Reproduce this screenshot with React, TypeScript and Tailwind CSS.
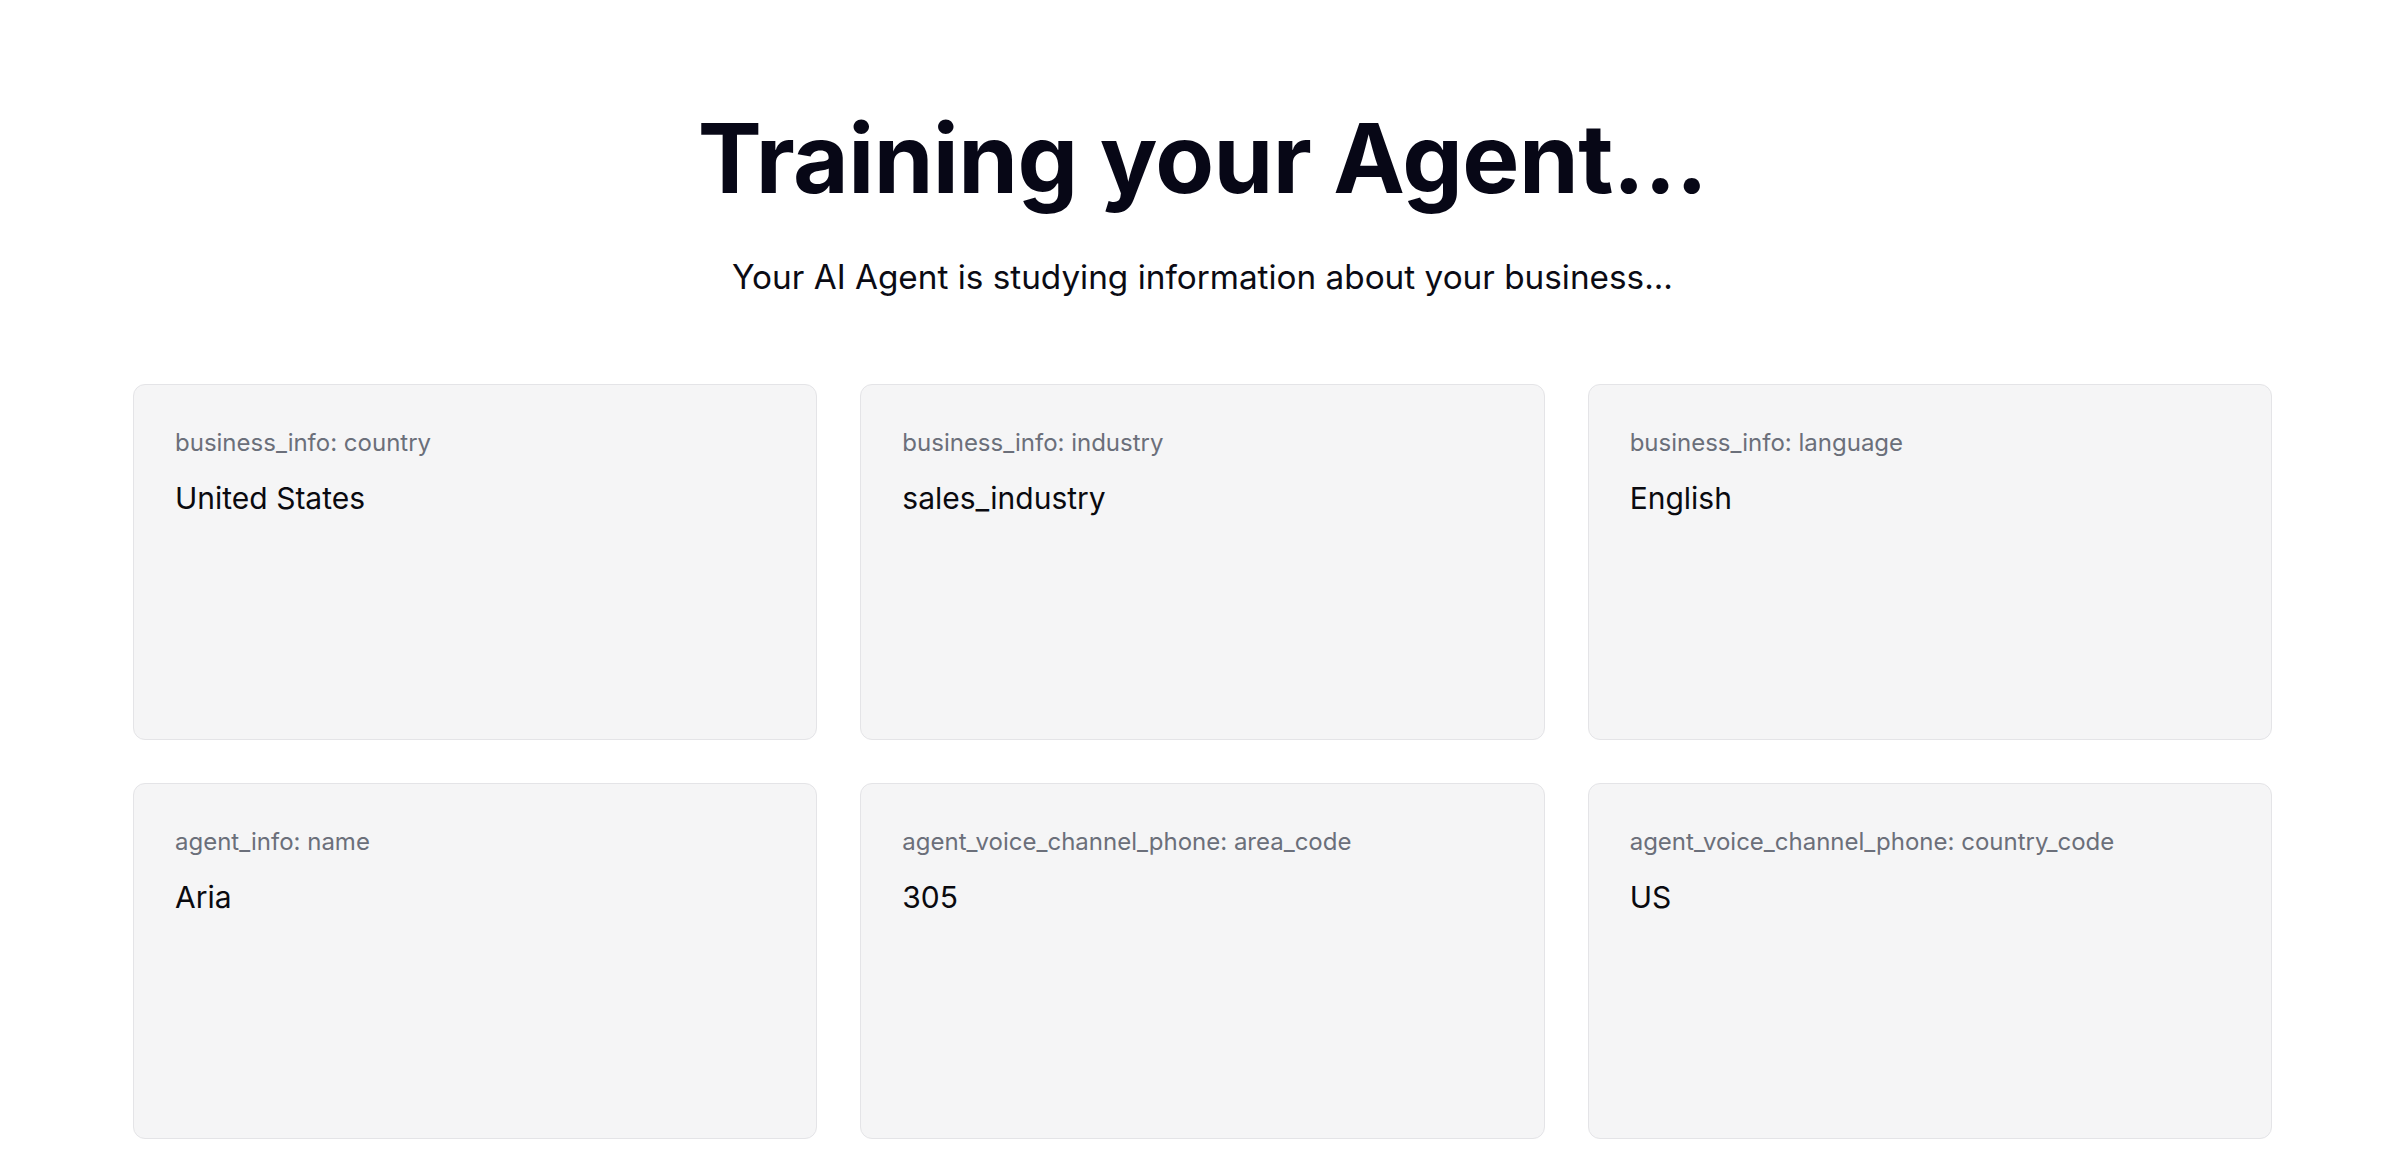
import React from 'react';

const fields = [
  { label: 'business_info: country', value: 'United States' },
  { label: 'business_info: industry', value: 'sales_industry' },
  { label: 'business_info: language', value: 'English' },
  { label: 'agent_info: name', value: 'Aria' },
  { label: 'agent_voice_channel_phone: area_code', value: '305' },
  { label: 'agent_voice_channel_phone: country_code', value: 'US' },
];

const App = () => {
  return (
    <div className="min-h-screen bg-white font-['Inter',sans-serif]">
      <div className="pl-[133px] pr-[128px] pt-[110px] pb-[28px]">
        {/* Header */}
        <div className="flex flex-col items-center">
          <h1 className="text-[96px] leading-none font-bold tracking-[-0.006em] text-[#070716]">
            Training your Agent...
          </h1>
          <p className="mt-[46px] text-[33.3px] leading-[50px] text-[#0b0b14]">
            Your AI Agent is studying information about your business...
          </p>
        </div>

        {/* Fields */}
        <div className="mt-[82px] grid grid-cols-3 gap-[43px]">
          {fields.map((field, index) => (
            <div
              key={index}
              className="h-[356px] rounded-[12px] border border-[#e4e4e7] bg-[#f5f5f6] px-[41px] pt-[42px]"
            >
              <div className="text-[24px] leading-[32px] text-[#6b6f7a]">{field.label}</div>
              <div className="mt-[19px] text-[30px] leading-[40px] text-[#0a0a0f]">{field.value}</div>
            </div>
          ))}
        </div>
      </div>
    </div>
  );
};

export default App;
